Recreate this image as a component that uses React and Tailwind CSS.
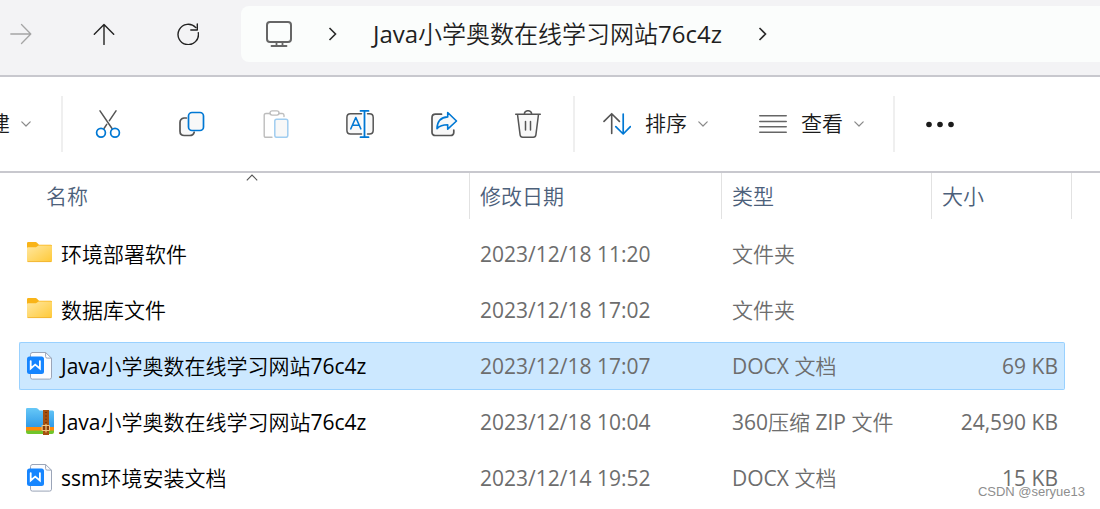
import React, { useState } from 'react'
import clsx from 'clsx'

const files = [
    { id: 1, name: '环境部署软件', date: '2023/12/18 11:20', type: '文件夹', size: '', icon: 'folder' },
    { id: 2, name: '数据库文件', date: '2023/12/18 17:02', type: '文件夹', size: '', icon: 'folder' },
    { id: 3, name: 'Java小学奥数在线学习网站76c4z', date: '2023/12/18 17:07', type: 'DOCX 文档', size: '69 KB', icon: 'doc' },
    { id: 4, name: 'Java小学奥数在线学习网站76c4z', date: '2023/12/18 10:04', type: '360压缩 ZIP 文件', size: '24,590 KB', icon: 'zip' },
    { id: 5, name: 'ssm环境安装文档', date: '2023/12/14 19:52', type: 'DOCX 文档', size: '15 KB', icon: 'doc' },
]

const Svg = ({ size = 28, children }) => (
    <svg width={size} height={size} viewBox={`0 0 ${size} ${size}`} fill="none" strokeWidth="1.5" strokeLinecap="round" strokeLinejoin="round" className="shrink-0" aria-hidden="true">
        {children}
    </svg>
)

const ChevronDown = () => (
    <Svg size={12}>
        <path d="M1.8 3.8L6 8L10.2 3.8" stroke="#8a8a8a" strokeWidth="1.2" />
    </Svg>
)

const ChevronRight = () => (
    <svg width="9" height="16" viewBox="0 0 9 16" fill="none" className="shrink-0" aria-hidden="true">
        <path d="M1.5 2L7.5 8L1.5 14" stroke="#2a2a2a" strokeWidth="1.6" />
    </svg>
)

const FolderIcon = () => (
    <Svg>
        <defs>
            <linearGradient id="folder" x1="0" y1="0" x2="1" y2="1">
                <stop offset="0" stopColor="#ffe7a0" />
                <stop offset="1" stopColor="#ffc937" />
            </linearGradient>
        </defs>
        <path d="M1 3.2Q1 2 2.2 2H9.6Q10.4 2 11 2.7L13 4.8H24.8Q26 4.8 26 6V12H1Z" fill="#f9b418" />
        <path d="M1 8.2Q1 7.2 2 7.2H10L12.6 5.6H25Q26 5.6 26 6.6V20.8Q26 22 24.8 22H2.2Q1 22 1 20.8Z" fill="url(#folder)" />
        <path d="M2 21.6H25" stroke="#efb02c" strokeWidth="0.8" />
    </Svg>
)

const DocIcon = () => (
    <Svg>
        <path d="M6.4 0.5H19.6L25.5 6.2V25.2Q25.5 27.1 23.6 27.1H6.4Q4.5 27.1 4.5 25.2V2.4Q4.5 0.5 6.4 0.5Z" fill="#fbfcff" stroke="#9ba5b8" strokeWidth="1" />
        <path d="M19.6 0.7V4.6Q19.6 6.1 21.1 6.1H25.2" stroke="#9ba5b8" strokeWidth="1" />
        <rect x="1" y="4.5" width="17" height="17.5" rx="2.5" fill="#1685ff" />
        <path d="M4.7 9.1V16.5L9.2 12.6L13.9 16.5V9.1" stroke="#fff" strokeWidth="1.8" strokeLinejoin="miter" />
    </Svg>
)

const ZipIcon = () => (
    <Svg>
        <defs>
            <linearGradient id="zip" x1="0" y1="0" x2="0" y2="1">
                <stop offset="0" stopColor="#67c8f7" />
                <stop offset="1" stopColor="#309be8" />
            </linearGradient>
        </defs>
        <path d="M0 14H28V24Q28 26 26 26H2Q0 26 0 24Z" fill="#70c52b" />
        <path d="M0 14H28V22.5H0Z" fill="#ff8a0c" />
        <path d="M0 1.2Q0 0 1.2 0H10Q11 0 11.8 0.8L13.6 2.5H26.5Q28 2.5 28 4V19H0Z" fill="url(#zip)" />
        <path d="M17 2H23V27H17Z" fill="#a6500f" />
        <path d="M20 4V15" stroke="#5d2907" strokeWidth="1.4" strokeDasharray="1 2.4" strokeLinecap="butt" />
        <rect x="16.5" y="17.5" width="7" height="5" fill="#8a3d09" stroke="#f2c783" strokeWidth="1" />
        <path d="M20 16.5V24" stroke="#f2c783" strokeWidth="1.2" />
    </Svg>
)

const fileIcons = { folder: FolderIcon, doc: DocIcon, zip: ZipIcon }

const actions = [
    {
        label: '剪切',
        icon: (
            <Svg>
                <path d="M6 0.8L18 18.5M22 0.8L15.4 10.6M12.7 14.3L10 18.5" stroke="#555" />
                <circle cx="7" cy="22.7" r="4.4" stroke="#0078d4" strokeWidth="1.7" />
                <circle cx="21" cy="22.7" r="4.4" stroke="#0078d4" strokeWidth="1.7" />
            </Svg>
        ),
    },
    {
        label: '复制',
        icon: (
            <Svg>
                <path d="M8.4 8H6Q2 8.6 2 12.5V21.2Q2 25.5 6.2 25.5H11.5Q15.3 25.5 16.2 22.2" fill="#f8f8f8" stroke="#555" strokeWidth="1.7" />
                <rect x="10.5" y="2.5" width="15" height="18" rx="3.5" fill="#f8f8f8" stroke="#0078d4" strokeWidth="1.7" />
            </Svg>
        ),
    },
    {
        label: '粘贴',
        icon: (
            <Svg>
                <path d="M8 3.5H4Q2.2 3.5 2.2 5.3V25.4Q2.2 27.3 4 27.3H10M17 3.5H20.3Q22 3.5 22 5.3V6.5" stroke="#bdbdbd" strokeWidth="1.4" />
                <rect x="8" y="0.9" width="9" height="4.2" rx="2.1" stroke="#bdbdbd" strokeWidth="1.4" />
                <rect x="12.8" y="9.3" width="13" height="18" rx="1.8" fill="#f8f8f8" stroke="#a0cdf0" strokeWidth="1.5" />
            </Svg>
        ),
    },
    {
        label: '重命名',
        icon: (
            <Svg>
                <path d="M15.5 3.8H4.5Q0.9 3.8 0.9 7.5V20.2Q0.9 24 4.5 24H15.5M21.5 3.8H23.5Q27.2 3.8 27.2 7.5V20.2Q27.2 24 23.5 24H21.5" fill="#f8f8f8" stroke="#555" />
                <path d="M4.8 18.8L9.8 7.5L14.8 18.8M6.5 15.3H13" stroke="#0078d4" strokeWidth="1.6" />
                <path d="M14.5 0.9H22.5M18.5 0.9V27.2M14.5 27.2H22.5" stroke="#0078d4" strokeWidth="1.8" />
            </Svg>
        ),
    },
    {
        label: '共享',
        icon: (
            <Svg>
                <path d="M11.5 4.2H5.5Q2 4.2 2 7.8V22.2Q2 25.5 5.5 25.5H20.4Q23.8 25.5 23.8 22.2V20.2" fill="#f8f8f8" stroke="#555" strokeWidth="1.7" />
                <path d="M17.7 2.5L26.5 11L17.7 19.2V14.8Q10.5 14.8 7 18.6Q7.3 7.6 17.7 6.9Z" fill="#f8f8f8" stroke="#0078d4" strokeWidth="1.6" />
            </Svg>
        ),
    },
    {
        label: '删除',
        icon: (
            <Svg>
                <path d="M3.5 4.2H24.5L21.9 24.8Q21.6 27.2 19.3 27.2H8.7Q6.4 27.2 6.1 24.8Z" fill="#f8f8f8" />
                <path d="M1.7 4.2H26.3M3.5 4.4L6.1 24.8Q6.4 27.2 8.7 27.2H19.3Q21.6 27.2 21.9 24.8L24.5 4.4M10.3 4C10.8 -0.4 17.2 -0.4 17.7 4M11.5 11.5V20M16.5 11.5V20" stroke="#555" />
            </Svg>
        ),
    },
]

const Separator = () => <div className="mx-[3px] h-14 w-0.5 shrink-0 bg-[#efefef]" />

const NavBar = () => (
    <nav className="flex border-b-2 border-[#c8c8ce] bg-[#f3f3f5] pt-1.5 pb-[13px]">
        <button type="button" disabled aria-label="前进" className="flex w-[62px] shrink-0 items-center pl-[10px]">
            <Svg size={22}>
                <path d="M0.8 11H20.5M11.5 1.5L20.8 11L11.5 20.5" stroke="#a5a5a5" strokeWidth="1.3" />
            </Svg>
        </button>
        <button type="button" aria-label="上移" className="flex w-21 shrink-0 items-center justify-center">
            <Svg size={22}>
                <path d="M11 21.5V1.5M1.3 11.2L11 1.5L20.7 11.2" stroke="#222" strokeWidth="1.4" />
            </Svg>
        </button>
        <button type="button" aria-label="刷新" className="flex w-21 shrink-0 items-center justify-center">
            <Svg size={22}>
                <path d="M21.3 9.7A10.2 10.2 0 1 1 18.8 4.6M20.3 0.9V7H13.8" stroke="#222" strokeWidth="1.4" />
            </Svg>
        </button>
        <div className="ml-[11px] flex h-14 grow items-center gap-9 rounded-l-lg bg-[#fbfdfc] pl-[25px]">
            <button type="button" aria-label="此电脑">
                <Svg size={26}>
                    <rect x="1" y="1" width="24" height="20" rx="3" stroke="#666" strokeWidth="2" />
                    <path d="M10.5 21V25M16.5 21V25M5.5 25H20.5" stroke="#666" strokeWidth="1.8" />
                </Svg>
            </button>
            <ChevronRight />
            <button type="button" className="text-2xl whitespace-nowrap text-[#1f1f1f]">Java小学奥数在线学习网站76c4z</button>
            <ChevronRight />
        </div>
    </nav>
)

const Toolbar = () => (
    <div className="flex items-center overflow-hidden border-b-2 border-[#c8c8ce] py-[19px] text-[21px] text-[#1b1b1b]">
        <button type="button" className="flex w-[58px] shrink-0 items-center gap-[10px]">
            <span className="flex w-[10px] justify-end overflow-hidden">建</span>
            <ChevronDown />
        </button>
        <Separator />
        {actions.map((item) => (
            <button key={item.label} type="button" aria-label={item.label} className="flex w-21 shrink-0 justify-center">
                {item.icon}
            </button>
        ))}
        <Separator />
        <button type="button" className="flex shrink-0 items-center px-[25px]">
            <Svg>
                <path d="M8.7 23.5V4M1 11.4L8.7 3.7L16.4 11.4" stroke="#555" strokeWidth="1.6" />
                <path d="M20.2 4V23.8M12.8 16.6L20.2 24L27.4 16.6" stroke="#0078d4" strokeWidth="1.7" />
            </Svg>
            <span className="mr-[10px] ml-[14px]">排序</span>
            <ChevronDown />
        </button>
        <button type="button" className="flex shrink-0 items-center px-[25px]">
            <Svg>
                <path d="M0.8 5.7H27.2M0.8 11.5H27.2M0.8 16.8H27.2M0.8 22.3H27.2" stroke="#666" strokeWidth="1.6" />
            </Svg>
            <span className="mr-[10px] ml-[14px]">查看</span>
            <ChevronDown />
        </button>
        <Separator />
        <button type="button" aria-label="更多" className="flex w-21 shrink-0 justify-center">
            <Svg>
                <g fill="#1b1b1b">
                    <circle cx="3" cy="14.5" r="2.8" />
                    <circle cx="14" cy="14.5" r="2.8" />
                    <circle cx="25" cy="14.5" r="2.8" />
                </g>
            </Svg>
        </button>
    </div>
)

const HeaderCell = ({ className, children }) => (
    <th scope="col" className="p-0 pb-[7px] text-left font-normal">
        <div className={clsx('relative flex h-[46px] items-center border-r border-[#e2e2e2]', className)}>{children}</div>
    </th>
)

const App = () => {
    const [selected, setSelected] = useState(3)

    return (
        <div className="relative min-w-[960px] bg-white font-['Open_Sans','Noto_Sans_CJK_SC_DemiLight','Noto_Sans_CJK_SC_Light','Noto_Sans_CJK_SC',sans-serif]">
            <NavBar />
            <Toolbar />
            <main className="pr-7 pl-[19px]">
                <table className="w-full table-fixed border-collapse text-[21px] leading-7 whitespace-nowrap text-[#6d6d6d]">
                    <colgroup>
                        <col />
                        <col className="w-[252px]" />
                        <col className="w-[210px]" />
                        <col className="w-[140px]" />
                    </colgroup>
                    <thead className="text-[#4c607a]">
                        <tr>
                            <HeaderCell className="pl-[27px]">
                                名称
                                <svg width="12" height="7" viewBox="0 0 12 7" fill="none" className="absolute top-px left-1/2 ml-0.5" aria-hidden="true">
                                    <path d="M0.8 6.3L6 1L11.2 6.3" stroke="#555" strokeWidth="1.1" />
                                </svg>
                            </HeaderCell>
                            <HeaderCell className="pl-[10px]">修改日期</HeaderCell>
                            <HeaderCell className="pl-[10px]">类型</HeaderCell>
                            <HeaderCell className="pl-[10px]">大小</HeaderCell>
                        </tr>
                    </thead>
                    <tbody>
                        {files.map((file) => {
                            const Icon = fileIcons[file.icon]
                            const cell = clsx(
                                'flex h-12 items-center border-y',
                                file.id === selected ? 'border-[#99d1ff] bg-[#cce8ff]' : 'border-transparent'
                            )
                            return (
                                <tr key={file.id} onClick={() => setSelected(file.id)}>
                                    <td className="px-0 py-1">
                                        <div className={clsx(cell, 'gap-[7px] rounded-l-xs border-l pl-1.5 text-black')}>
                                            <Icon />
                                            {file.name}
                                        </div>
                                    </td>
                                    <td className="px-0 py-1">
                                        <div className={clsx(cell, 'pl-[10px]')}>{file.date}</div>
                                    </td>
                                    <td className="px-0 py-1">
                                        <div className={clsx(cell, 'pl-[10px]')}>{file.type}</div>
                                    </td>
                                    <td className="py-1 pr-[7px] pl-0">
                                        <div className={clsx(cell, 'justify-end rounded-r-xs border-r pr-1.5')}>{file.size}</div>
                                    </td>
                                </tr>
                            )
                        })}
                    </tbody>
                </table>
            </main>
            <div className="absolute right-[15px] bottom-1.5 font-['Liberation_Sans',sans-serif] text-[13px] leading-4 text-[#8e8e8e]">CSDN @seryue13</div>
        </div>
    )
}

export default App
